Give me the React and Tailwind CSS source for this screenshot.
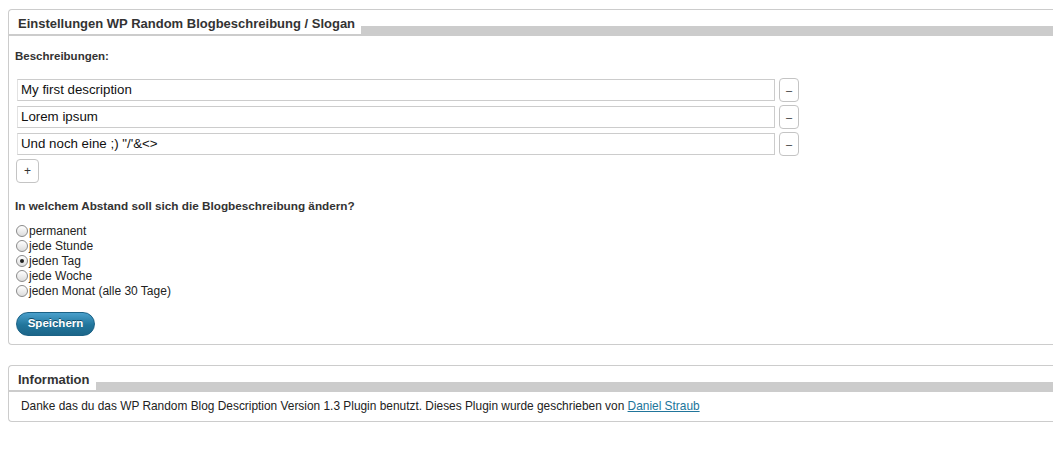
const descriptions = ["My first description", "Lorem ipsum", "Und noch eine ;) \"/'&<>"]

const intervals = [
  { label: "permanent", checked: false },
  { label: "jede Stunde", checked: false },
  { label: "jeden Tag", checked: true },
  { label: "jede Woche", checked: false },
  { label: "jeden Monat (alle 30 Tage)", checked: false },
]

function Panel({ title, children, className = "" }) {
  return (
    <section className={`border-t border-l border-b border-[#ccc] rounded-l-[4px] ${className}`}>
      <div className="h-[26px] flex items-end bg-[linear-gradient(to_bottom,transparent_16px,#ccc_16px)]">
        <h3 className="mb-[2px] bg-white pl-[9px] pr-[6px] text-[13px] font-bold leading-[20px] text-[#333]">
          {title}
        </h3>
      </div>
      {children}
    </section>
  )
}

function Radio({ checked }) {
  return (
    <span className="flex items-center justify-center w-[12px] h-[12px] rounded-full border border-[#8a8a8a] bg-[linear-gradient(to_bottom,#fff,#dcdcdc)]">
      {checked && <span className="w-[4px] h-[4px] rounded-full bg-[#222]" />}
    </span>
  )
}

export default function App() {
  return (
    <div className="min-h-screen bg-white pt-[9px] pl-[8px] font-['Liberation_Sans',Arial,sans-serif] text-[#333]">
      <Panel title="Einstellungen WP Random Blogbeschreibung / Slogan">
        <div className="pl-[6px] pt-[14px] pb-[8px]">
          <p className="text-[11.5px] font-bold leading-[13px]">Beschreibungen:</p>

          <div className="mt-[15px] flex flex-col gap-[3px]">
            {descriptions.map((d) => (
              <div key={d} className="flex items-center gap-[4px] h-[24px]">
                <div className="ml-[2px] w-[758px] h-[22px] flex items-center border border-[#ccc] border-l-[#e2e2e2] pl-[3px] text-[13.3px] text-[#111]">
                  {d}
                </div>
                <button className="w-[20px] h-[24px] rounded-[4px] border border-[#c4c4c4] bg-white text-[11px] leading-none text-[#333]">
                  –
                </button>
              </div>
            ))}
            <button className="ml-[1px] w-[23px] h-[24px] rounded-[4px] border border-[#c4c4c4] bg-white text-[12px] leading-none text-[#333]">
              +
            </button>
          </div>

          <p className="mt-[16px] text-[11.75px] font-bold leading-[13px]">
            In welchem Abstand soll sich die Blogbeschreibung ändern?
          </p>

          <div className="mt-[11px] flex flex-col">
            {intervals.map((i) => (
              <label key={i.label} className="flex items-center h-[15px] pl-[1px] text-[12px] text-[#222]">
                <Radio checked={i.checked} />
                <span className="ml-[1px]">{i.label}</span>
              </label>
            ))}
          </div>

          <button className="mt-[14px] ml-[1px] w-[79px] h-[24px] rounded-full border border-[#1b6286] bg-[linear-gradient(to_bottom,#4aa0cc,#21759b_55%,#1c6689)] text-[11.5px] font-bold text-white [text-shadow:0_-1px_0_#0f4a66]">
            Speichern
          </button>
        </div>
      </Panel>

      <Panel title="Information" className="mt-[20px]">
        <div className="pl-[12px] pt-[5px] pb-[6px] text-[11.9px] leading-[18px] text-[#222]">
          Danke das du das WP Random Blog Description Version 1.3 Plugin benutzt. Dieses Plugin wurde geschrieben von{" "}
          <a href="#" className="text-[#21759b] underline">
            Daniel Straub
          </a>
        </div>
      </Panel>
    </div>
  )
}
